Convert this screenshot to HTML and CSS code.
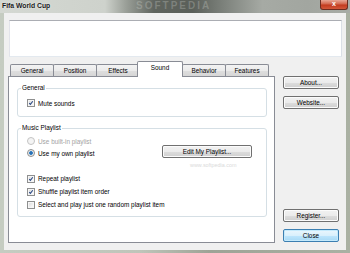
FILE: index.html
```html
<!DOCTYPE html>
<html>
<head>
  <meta charset="utf-8">
  <title>Fifa World Cup</title>
  <link rel="stylesheet" href="styles.css">
</head>
<body>
  <div class="window">
    <div class="titlebar">
      <span class="title">Fifa World Cup</span>
      <span class="mark">SOFTPEDIA</span>
      <span class="close">x</span>
    </div>
    <div class="client">
      <div class="display"></div>
      <div class="main">
        <div class="tabbox">
          <div class="tabs">
            <div class="tab">General</div>
            <div class="tab wide">Position</div>
            <div class="tab">Effects</div>
            <div class="tab current">Sound</div>
            <div class="tab">Behavior</div>
            <div class="tab">Features</div>
          </div>
          <div class="panel">
            <fieldset class="group general">
              <legend>General</legend>
              <label class="opt"><span class="box"><svg viewBox="0 0 8 8"><path d="M1.6 4.1 L3.2 5.9 L6.4 1.7"/></svg></span>Mute sounds</label>
            </fieldset>
            <fieldset class="group playlist">
              <legend>Music Playlist</legend>
              <div class="source">
                <div class="radios">
                  <label class="opt off"><span class="radio"></span>Use built-in playlist</label>
                  <label class="opt"><span class="radio on"></span>Use my own playlist</label>
                </div>
                <button class="btn edit">Edit My Playlist...</button>
              </div>
              <div class="site">www.softpedia.com</div>
              <label class="opt row"><span class="box"><svg viewBox="0 0 8 8"><path d="M1.6 4.1 L3.2 5.9 L6.4 1.7"/></svg></span>Repeat playlist</label>
              <label class="opt row"><span class="box"><svg viewBox="0 0 8 8"><path d="M1.6 4.1 L3.2 5.9 L6.4 1.7"/></svg></span>Shuffle playlist item order</label>
              <label class="opt row"><span class="box"></span>Select and play just one random playlist item</label>
            </fieldset>
          </div>
        </div>
        <div class="side">
          <button class="btn">About...</button>
          <button class="btn">Website...</button>
          <button class="btn push">Register...</button>
          <button class="btn default">Close</button>
        </div>
      </div>
    </div>
  </div>
</body>
</html>
```

FILE: styles.css
```css
* {box-sizing:border-box;}
body, html {
  margin:0;
  padding:0;
  width:350px;
  height:253px;
  overflow:hidden;
  font-family:"Liberation Sans", Arial, sans-serif;
  font-size:6.4px;
  color:#000;
}
.window {
  width:350px;
  height:253px;
  background:linear-gradient(90deg, #c5ccc1 0, #bfc5ba 40%, #9da396 60%, #aab1a3 100%);
}
.titlebar {
  position:relative;
  display:flex;
  align-items:flex-start;
  height:13px;
  padding:0 2px;
  background:linear-gradient(90deg, #d4d8d2 0, #ced2cc 30%, #9a9f98 36%, #5f645e 44%, #5a5f59 55%, #7d827c 64%, #a6aaa4 75%, #a2a6a0 88%, #a8aca6 100%);
}
.title {
  padding-top:2px;
  font-size:6.8px;
  font-weight:bold;
  color:#1b1b1b;
  text-shadow:0 0 2px #f2f2f2;
}
.mark {
  position:absolute;
  left:136px;
  top:0;
  font-size:10px;
  line-height:12px;
  font-weight:bold;
  letter-spacing:2px;
  color:rgba(215,218,212,0.28);
}
.close {
  margin-left:auto;
  width:28px;
  height:10px;
  border:1px solid #6d2c20;
  border-top:none;
  border-radius:0 0 3px 3px;
  background:linear-gradient(#e8a796 0, #d3654c 45%, #c23a1f 55%, #d2573a 100%);
  color:#fff;
  font-weight:bold;
  font-size:7px;
  line-height:8px;
  text-align:center;
}
.client {
  height:237px;
  margin:0 4px;
  padding:7px 4px 0 5px;
  background:#f0f0f0;
}
.display {
  height:37px;
  background:#fff;
  border:1px solid;
  border-color:#abadb3 #dbdfe6 #e3e9ef #e2e3ea;
}
.main {
  display:flex;
  margin:4px 0 0 -1px;
}
.tabbox {
  width:267px;
}
.tabs {
  position:relative;
  z-index:1;
  display:flex;
  align-items:flex-end;
  height:16px;
  padding-left:2px;
}
.tab {
  width:44px;
  height:12px;
  margin:0 -1px 1px 0;
  border:1px solid #898c95;
  border-bottom:none;
  border-radius:2px 2px 0 0;
  background:linear-gradient(#f3f3f3 0, #ebebeb 50%, #dedede 51%, #d6d6d6 100%);
  text-align:center;
  line-height:11px;
}
.tab.current {
  width:46px;
  height:16px;
  margin:0 -2px 0 -2px;
  background:#fff;
  line-height:11px;
  position:relative;
}
.tab.current + .tab {
  margin-left:1px;
}
.panel {
  height:167px;
  margin-top:-1px;
  padding:7px 7px 0 8px;
  background:#fff;
  border:1px solid #898c95;
}
.group {
  margin:0;
  padding:6px 8px 8px 9px;
  border:1px solid #d5dfe5;
  border-radius:3px;
}
.group legend {
  margin-left:-6px;
  padding:0 1px;
  line-height:8px;
}
.playlist {
  margin-top:7px;
  padding:3px 14px 5px 9px;
}
.opt {
  display:flex;
  align-items:center;
  gap:3px;
  height:10px;
}
.opt.row {
  height:13px;
}
.radios .opt {
  height:12px;
}
.opt.off {
  color:#a3a3a3;
}
.box {
  display:block;
  width:8px;
  height:8px;
  border:1px solid #8e8f8f;
  background:linear-gradient(135deg, #d6d6d6 0, #f4f4f4 70%, #fff 100%);
  box-shadow:inset 0 0 0 1px #f6f6f6;
}
.box svg {
  display:block;
  width:6px;
  height:6px;
}
.box path {
  fill:none;
  stroke:#2c4a86;
  stroke-width:1.4;
}
.radio {
  display:block;
  width:8px;
  height:8px;
  border:1px solid #8e8f8f;
  border-radius:50%;
  background:linear-gradient(135deg, #d8d8d8 0, #fafafa 100%);
}
.off .radio {
  border-color:#c4c4c4;
  background:#f4f4f4;
}
.radio.on {
  background:radial-gradient(circle, #1f5c9c 0, #3c86c8 1.6px, #e8e8e8 2.2px, #f6f6f6 100%);
}
.source {
  display:flex;
}
.btn {
  display:block;
  height:13px;
  padding:0;
  border:1px solid #707070;
  border-radius:2px;
  background:linear-gradient(#f2f2f2 0, #ebebeb 50%, #dddddd 51%, #cfcfcf 100%);
  box-shadow:inset 0 0 0 1px #fbfbfb;
  font-family:inherit;
  font-size:6.4px;
  color:#000;
  line-height:11px;
}
.edit {
  width:90px;
  margin:auto 0 1px auto;
}
.site {
  height:13px;
  padding-left:163px;
  font-size:5.4px;
  line-height:13px;
  color:#dadada;
}
.side {
  display:flex;
  flex-direction:column;
  width:56px;
  margin-left:8px;
  padding:15px 0 1px;
}
.side .btn {
  width:56px;
  margin-bottom:7px;
}
.side .btn.push {
  margin-top:auto;
}
.side .btn.default {
  margin-bottom:0;
  border-color:#3c7fb1;
  background:linear-gradient(#eaf6fd 0, #d9f0fc 50%, #bee6fd 51%, #a7d9f5 100%);
  box-shadow:inset 0 0 0 1px #c4eafc;
}
```
